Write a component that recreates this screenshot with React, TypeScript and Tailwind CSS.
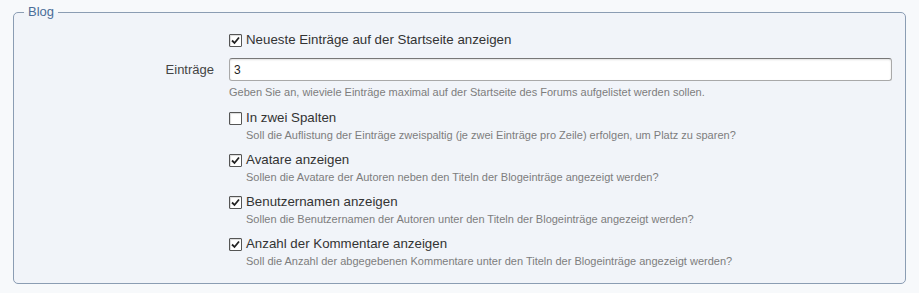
import React from "react";

const font = { fontFamily: '"Liberation Sans", Arial, sans-serif' };

function Box({ checked }: { checked: boolean }) {
  return (
    <span className="flex h-[13px] w-[13px] shrink-0 items-center justify-center rounded-[1px] border border-[#555] bg-white shadow-[inset_1px_1px_1px_rgba(0,0,0,0.15)]">
      {checked && (
        <svg width="9" height="9" viewBox="0 0 9 9">
          <path d="M1 4.5 L3.5 7 L8 1.5" fill="none" stroke="#222" strokeWidth="1.8" />
        </svg>
      )}
    </span>
  );
}

const options = [
  {
    label: "In zwei Spalten",
    checked: false,
    desc: "Soll die Auflistung der Einträge zweispaltig (je zwei Einträge pro Zeile) erfolgen, um Platz zu sparen?",
  },
  {
    label: "Avatare anzeigen",
    checked: true,
    desc: "Sollen die Avatare der Autoren neben den Titeln der Blogeinträge angezeigt werden?",
  },
  {
    label: "Benutzernamen anzeigen",
    checked: true,
    desc: "Sollen die Benutzernamen der Autoren unter den Titeln der Blogeinträge angezeigt werden?",
  },
  {
    label: "Anzahl der Kommentare anzeigen",
    checked: true,
    desc: "Soll die Anzahl der abgegebenen Kommentare unter den Titeln der Blogeinträge angezeigt werden?",
  },
];

export default function App() {
  return (
    <div className="h-[293px] w-[919px] bg-[#f7f9fb] px-[13px] pt-[4px]" style={font}>
      <fieldset className="rounded-[5px] border border-[#8b9db3] bg-[#f1f4f9] pb-[15px] pl-0 pr-[13px]">
        <legend className="ml-[10px] px-[4px] text-[13px] leading-[16px] text-[#4a6d98]">Blog</legend>

        <div className="grid grid-cols-[200px_1fr] gap-x-[15px]">
          <div />
          <label className="mt-[12px] flex items-center gap-[4px] text-[13.3px] leading-[16px] text-[#333]">
            <Box checked />
            Neueste Einträge auf der Startseite anzeigen
          </label>

          <div className="mt-[10px] flex items-center justify-end text-[13px] text-[#444]">Einträge</div>
          <div className="mt-[10px] flex h-[23px] items-center rounded-[3px] border border-[#a9a9a9] border-t-[#777] bg-white px-[4px] text-[12px] text-[#222] shadow-[inset_0_1px_2px_rgba(0,0,0,0.12)]">
            3
          </div>

          <div />
          <p className="mt-[4px] text-[11px] leading-[14px] text-[#7d7d7d]">
            Geben Sie an, wieviele Einträge maximal auf der Startseite des Forums aufgelistet werden sollen.
          </p>

          <div />
          <div className="flex flex-col gap-[10px] pt-[11px]">
            {options.map((o) => (
              <div key={o.label}>
                <label className="flex items-center gap-[4px] text-[13.3px] leading-[16px] text-[#333]">
                  <Box checked={o.checked} />
                  {o.label}
                </label>
                <p className="mt-[2px] pl-[17px] text-[11px] leading-[14px] text-[#7d7d7d]">{o.desc}</p>
              </div>
            ))}
          </div>
        </div>
      </fieldset>
    </div>
  );
}
